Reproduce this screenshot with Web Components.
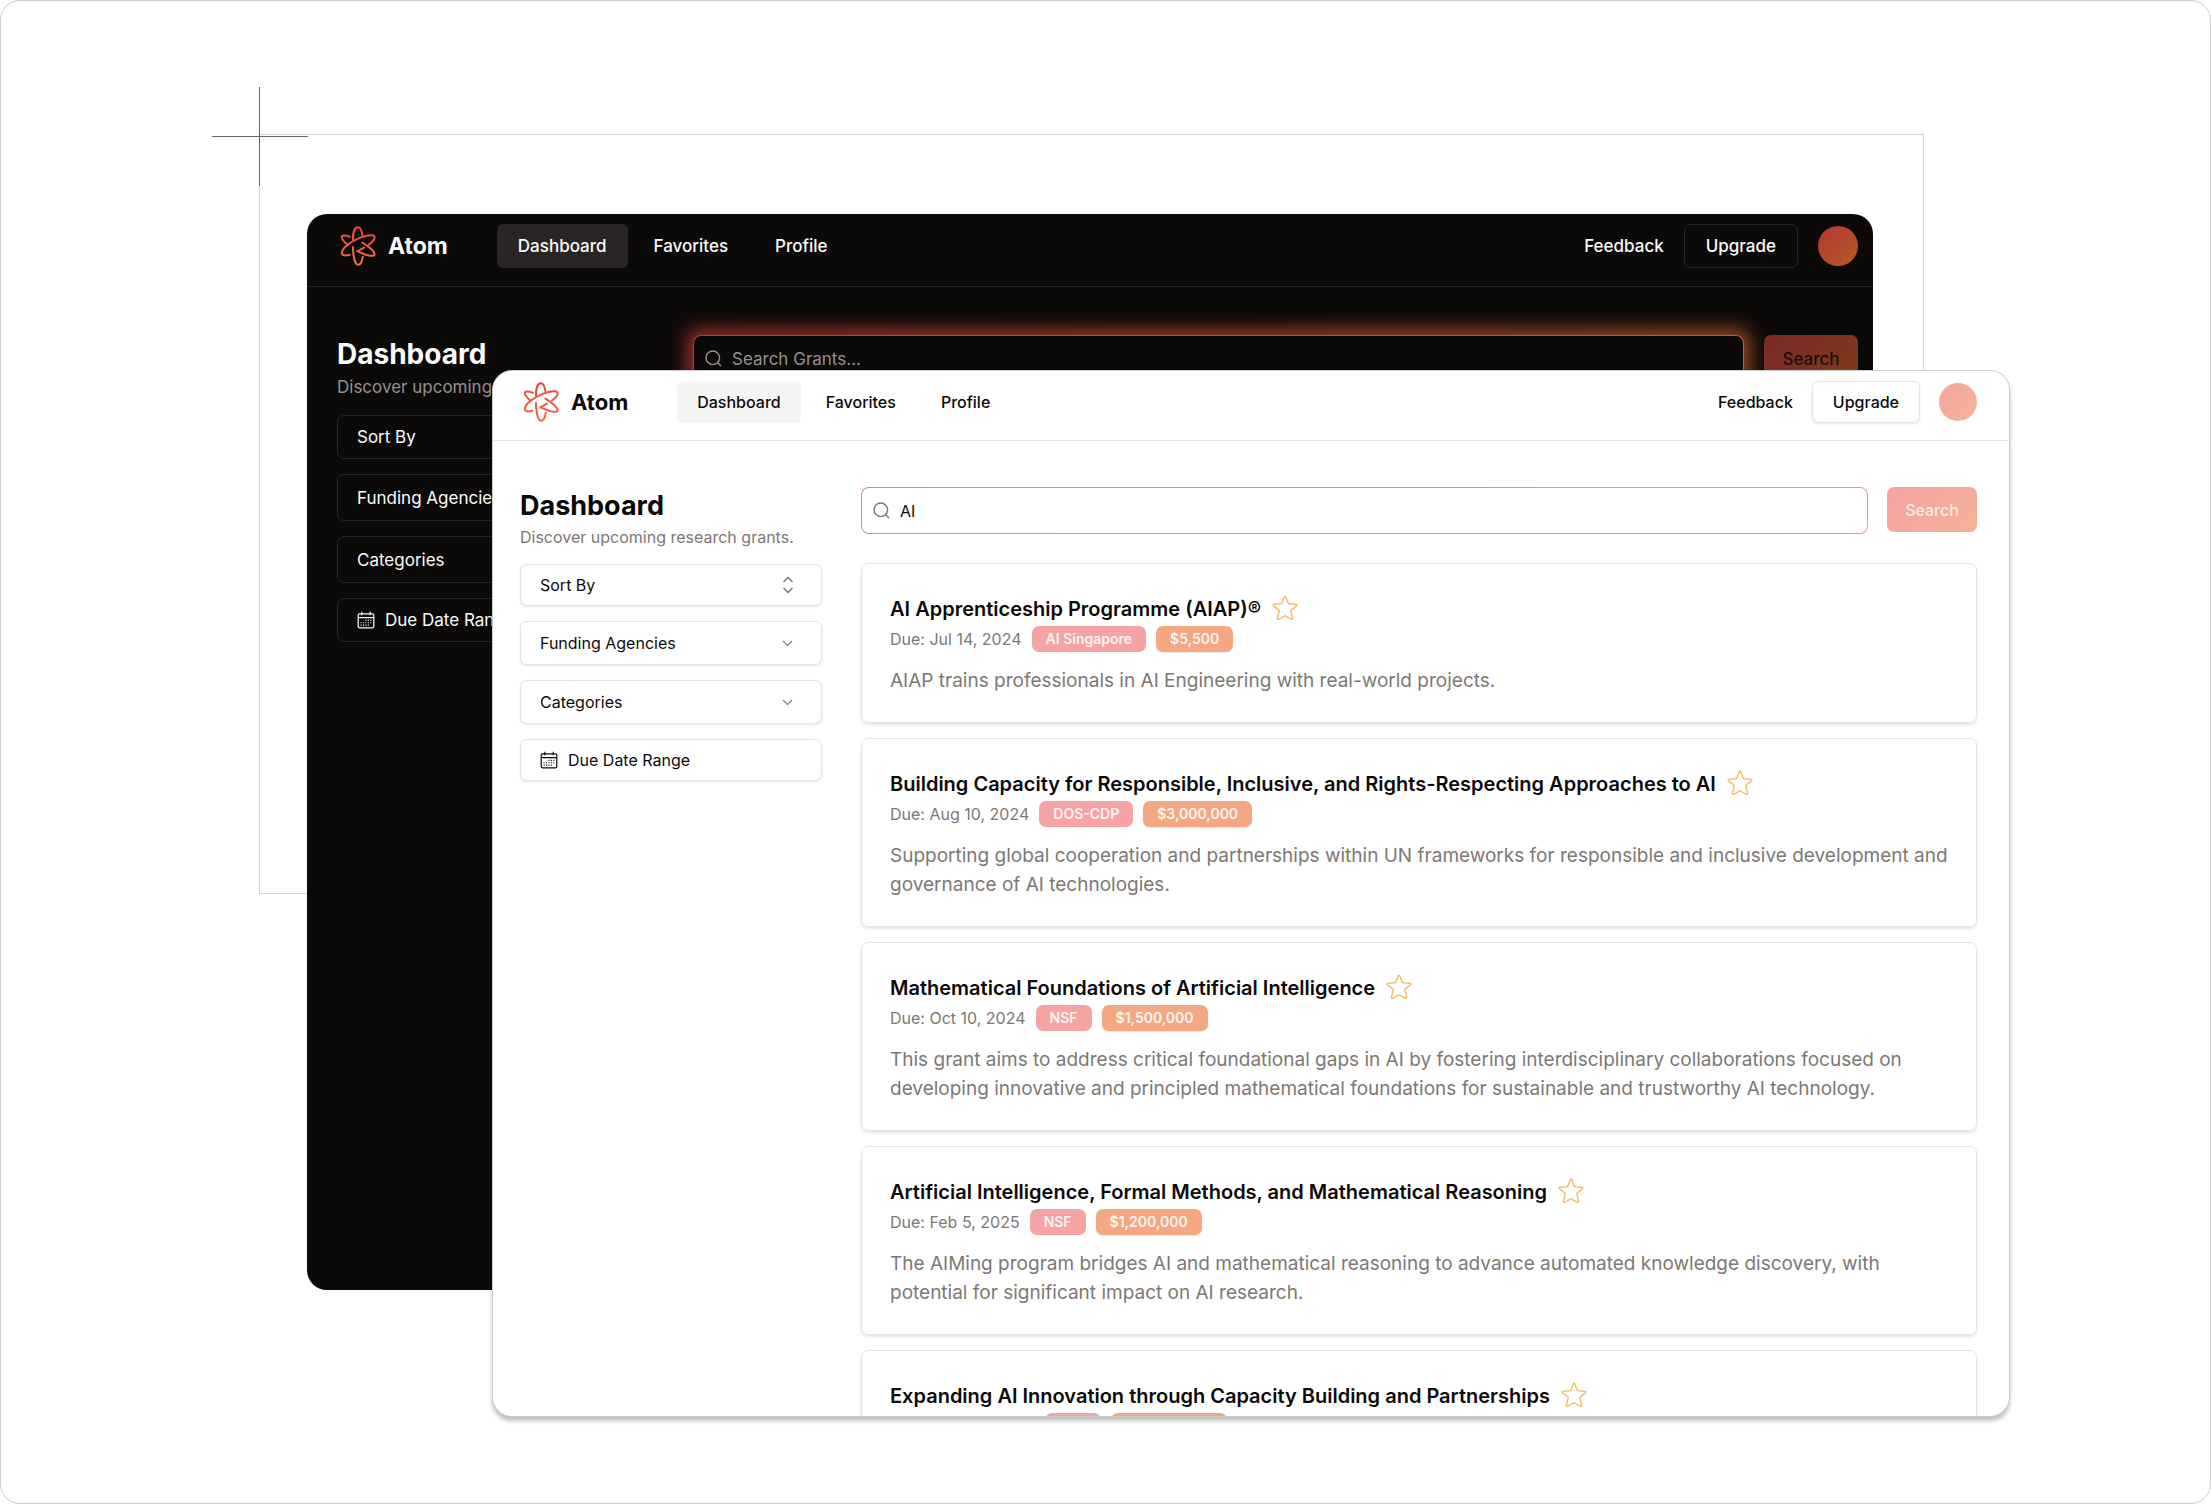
<!DOCTYPE html>
<html lang="en">
<head>
<meta charset="UTF-8">
<meta name="viewport" content="width=device-width, initial-scale=1">
<title>Atom</title>
<style>
    body {
        margin: 0;
        background: #fff;
        font-family: Inter, "Liberation Sans", sans-serif;
    }
</style>
</head>
<body>
<showcase-stage>
    <atom-window slot="back" theme="dark">
        <atom-header slot="header"></atom-header>
        <filter-panel slot="sidebar"></filter-panel>
        <search-bar></search-bar>
    </atom-window>
    <atom-window slot="front" theme="light">
        <atom-header slot="header"></atom-header>
        <filter-panel slot="sidebar"></filter-panel>
        <search-bar query="AI"></search-bar>
        <grant-card due="Jul 14, 2024" agency="AI Singapore" amount="$5,500">
            <span slot="title">AI Apprenticeship Programme (AIAP)®</span>
            AIAP trains professionals in AI Engineering with real-world projects.
        </grant-card>
        <grant-card due="Aug 10, 2024" agency="DOS-CDP" amount="$3,000,000">
            <span slot="title">Building Capacity for Responsible, Inclusive, and Rights-Respecting Approaches to AI</span>
            Supporting global cooperation and partnerships within UN frameworks for responsible and inclusive development and governance of AI technologies.
        </grant-card>
        <grant-card due="Oct 10, 2024" agency="NSF" amount="$1,500,000">
            <span slot="title">Mathematical Foundations of Artificial Intelligence</span>
            This grant aims to address critical foundational gaps in AI by fostering interdisciplinary collaborations focused on developing innovative and principled mathematical foundations for sustainable and trustworthy AI technology.
        </grant-card>
        <grant-card due="Feb 5, 2025" agency="NSF" amount="$1,200,000">
            <span slot="title">Artificial Intelligence, Formal Methods, and Mathematical Reasoning</span>
            The AIMing program bridges AI and mathematical reasoning to advance automated knowledge discovery, with potential for significant impact on AI research.
        </grant-card>
        <grant-card>
            <span slot="title">Expanding AI Innovation through Capacity Building and Partnerships</span>
        </grant-card>
    </atom-window>
</showcase-stage>

<script>
// Canvas with the guide lines and the two overlapping windows
class ShowcaseStage extends HTMLElement {
    constructor() {
        super();
        this.attachShadow({ mode: 'open' });
        this.shadowRoot.innerHTML = `
            <style>
                :host {
                    display: block;
                    position: relative;
                    box-sizing: border-box;
                    min-height: 100vh;
                    border: 1px solid #ccc;
                    border-radius: 20px;
                    overflow: hidden;
                }
                .frame {
                    position: absolute;
                    inset: 133px 286px 609px 258px;
                    border: 1px solid #d4d4d4;
                }
                .cross {
                    position: absolute;
                    left: 211px;
                    top: 86px;
                    width: 96px;
                    height: 99px;
                }
                ::slotted(*) {
                    position: absolute;
                }
                ::slotted([slot="back"]) {
                    inset: 213px 337px 213px 306px;
                }
                ::slotted([slot="front"]) {
                    inset: 369px 200px 86px 491px;
                }
            </style>
            <div class="frame"></div>
            <svg class="cross" viewBox="0 0 96 99" aria-hidden="true">
                <path d="M47.5 0V99M0 49.5H96" stroke="#666" fill="none"/>
            </svg>
            <slot name="back"></slot>
            <slot name="front"></slot>
        `;
    }
}

class AtomWindow extends HTMLElement {
    constructor() {
        super();
        this.attachShadow({ mode: 'open' });
        this.shadowRoot.innerHTML = `
            <style>
                :host {
                    --bg: #fff;
                    --fg: #0c0a09;
                    --muted: #7d7874;
                    --line: #e4e4e4;
                    --pill: #f5f5f4;
                    --edge: 32px;
                    --logo-pad: 30px;
                    --header-end: 17px;
                    --space: 19px;
                    --link-pad: 20px;
                    --control: 42px;
                    --combo: 44px;
                    --avatar: 38px;
                    --text: 16px;
                    --brand: 22px;
                    --heading: 27px;
                    --heading-line: 38px;
                    --sub-line: 24px;
                    --avatar-fill: linear-gradient(135deg, #f5a3a3, #f6b592);
                    --button-fill: linear-gradient(135deg, #f5a3a3, #f6b198);
                    --button-text: #fdeeea;
                    --button-w: 90px;
                    --button-h: 45px;
                    --ring: linear-gradient(135deg, #ef7f78, #f09a7a);
                    --glow: none;
                    --shadow: 0 1px 3px rgba(0, 0, 0, 0.1);
                    box-sizing: border-box;
                    display: flex;
                    flex-direction: column;
                    overflow: hidden;
                    border: 1px solid #ccc;
                    border-radius: 20px;
                    box-shadow: 0 4px 4px rgba(0, 0, 0, 0.25);
                    background: var(--bg);
                    color: var(--fg);
                }
                :host([theme="dark"]) {
                    --bg: #0c0a09;
                    --fg: #fafaf9;
                    --muted: #96908c;
                    --line: #292524;
                    --pill: #292524;
                    --edge: 15px;
                    --logo-pad: 33px;
                    --header-end: 18px;
                    --space: 20px;
                    --link-pad: 21px;
                    --control: 44px;
                    --combo: 47px;
                    --avatar: 40px;
                    --text: 17px;
                    --brand: 23px;
                    --heading: 28px;
                    --heading-line: 39px;
                    --sub-line: 26px;
                    --avatar-fill: linear-gradient(135deg, #b53636, #b35c22);
                    --button-fill: linear-gradient(135deg, #7d2829, #7c3c1a);
                    --button-text: #1a0f0d;
                    --button-w: 94px;
                    --button-h: 47px;
                    --ring: linear-gradient(90deg, #c0392f, #c85a2c);
                    --glow: linear-gradient(90deg, #b3352f, #b3522a);
                    --shadow: none;
                    border: 0;
                    box-shadow: none;
                }
                .body {
                    display: grid;
                    grid-template-columns: 302px minmax(0, 1fr);
                    column-gap: 39px;
                    padding: 46px var(--edge) 0 27px;
                }
                :host([theme="dark"]) .body {
                    grid-template-columns: 312px minmax(0, 1fr);
                    column-gap: 44px;
                    padding: 48px var(--edge) 0 30px;
                }
                .results {
                    display: flex;
                    flex-direction: column;
                    gap: 15px;
                }
            </style>
            <slot name="header"></slot>
            <div class="body">
                <slot name="sidebar"></slot>
                <main class="results"><slot></slot></main>
            </div>
        `;
    }
}

class AtomHeader extends HTMLElement {
    constructor() {
        super();
        this.attachShadow({ mode: 'open' });
        this.shadowRoot.innerHTML = `
            <style>
                :host {
                    display: flex;
                    align-items: center;
                    flex: none;
                    padding: 10px var(--edge) var(--header-end) var(--logo-pad);
                    border-bottom: 1px solid var(--line);
                    font-size: var(--text);
                    font-weight: 500;
                }
                a {
                    color: inherit;
                    text-decoration: none;
                }
                .brand {
                    display: flex;
                    align-items: center;
                    gap: 12px;
                    margin-right: 49px;
                    font-size: var(--brand);
                    font-weight: 700;
                }
                .brand svg {
                    width: 36px;
                    height: 40px;
                }
                nav {
                    display: flex;
                    flex: 1;
                    gap: 5px;
                }
                nav a {
                    padding: 0 var(--link-pad);
                    border-radius: 6px;
                    line-height: var(--control);
                }
                nav a.active {
                    background: var(--pill);
                }
                .actions {
                    display: flex;
                    align-items: center;
                    gap: var(--space);
                }
                .upgrade {
                    box-sizing: border-box;
                    height: var(--control);
                    padding: 0 var(--link-pad);
                    border: 1px solid var(--line);
                    border-radius: 7px;
                    box-shadow: var(--shadow);
                    background: var(--bg);
                    color: inherit;
                    font: inherit;
                }
                .avatar {
                    width: var(--avatar);
                    height: var(--avatar);
                    padding: 0;
                    border: 0;
                    border-radius: 50%;
                    background: var(--avatar-fill);
                }
            </style>
            <a class="brand" href="#">
                <svg viewBox="70 66 106 118" fill="none" stroke="url(#flame)" stroke-width="6" stroke-linecap="round" stroke-linejoin="round" aria-hidden="true">
                    <defs>
                        <linearGradient id="flame" gradientUnits="userSpaceOnUse" x1="123" y1="70" x2="123" y2="180">
                            <stop offset="0" stop-color="#ec4444"/>
                            <stop offset="1" stop-color="#f1703f"/>
                        </linearGradient>
                    </defs>
                    <path d="M108 106C108 82 115 70 123 70C129 70 134 80 136 93"/>
                    <path d="M108 128C109 160 115 180 123 180C129 180 135 171 137 157"/>
                    <path d="M98 151C87 154 75 154 75 146C76 131 100 112 128 101C150 93 172 89 172 99C172 106 163 115 155 121"/>
                    <path d="M99 98C88 93 75 92 75 99C75 106 84 114 93 122"/>
                    <path d="M136 115C158 129 172 142 172 149C172 156 156 154 146 151L121 141L141 130"/>
                </svg>
                Atom
            </a>
            <nav>
                <a class="active" href="#">Dashboard</a>
                <a href="#">Favorites</a>
                <a href="#">Profile</a>
            </nav>
            <div class="actions">
                <a href="#">Feedback</a>
                <button class="upgrade">Upgrade</button>
                <button class="avatar" aria-label="Account"></button>
            </div>
        `;
    }
}

class FilterPanel extends HTMLElement {
    constructor() {
        super();
        this.attachShadow({ mode: 'open' });
        this.shadowRoot.innerHTML = `
            <style>
                :host {
                    display: block;
                    font-size: var(--text);
                }
                h1 {
                    margin: 0;
                    font-size: var(--heading);
                    line-height: var(--heading-line);
                    font-weight: 700;
                }
                p {
                    margin: 0;
                    color: var(--muted);
                    line-height: var(--sub-line);
                    white-space: nowrap;
                }
                .filters {
                    display: flex;
                    flex-direction: column;
                    gap: 15px;
                    margin-top: 15px;
                }
                .field {
                    display: grid;
                    align-items: center;
                }
                .field > * {
                    grid-area: 1 / 1;
                }
                select, button {
                    appearance: none;
                    box-sizing: border-box;
                    width: 100%;
                    height: var(--control);
                    padding: 0 19px;
                    border: 1px solid var(--line);
                    border-radius: 7px;
                    box-shadow: var(--shadow);
                    background: var(--bg);
                    color: inherit;
                    font: inherit;
                }
                .combo {
                    height: var(--combo);
                }
                .field svg {
                    justify-self: end;
                    width: 18px;
                    height: 18px;
                    margin-right: 25px;
                    pointer-events: none;
                }
                button {
                    display: flex;
                    align-items: center;
                    gap: 10px;
                }
                button svg {
                    width: 18px;
                    height: 18px;
                }
            </style>
            <h1>Dashboard</h1>
            <p>Discover upcoming research grants.</p>
            <div class="filters">
                <div class="field">
                    <select aria-label="Sort By"><option>Sort By</option></select>
                    <svg viewBox="0 0 18 18" fill="none" stroke="#777" stroke-width="1.5" aria-hidden="true">
                        <path d="M4.5 6L9 1.5L13.5 6M4.5 12L9 16.5L13.5 12"/>
                    </svg>
                </div>
                <div class="field">
                    <select class="combo" aria-label="Funding Agencies"><option>Funding Agencies</option></select>
                    <svg viewBox="0 0 18 18" fill="none" stroke="#888" stroke-width="1.3" aria-hidden="true"><path d="M4 7L8.5 11.5L13 7"/></svg>
                </div>
                <div class="field">
                    <select class="combo" aria-label="Categories"><option>Categories</option></select>
                    <svg viewBox="0 0 18 18" fill="none" stroke="#888" stroke-width="1.3" aria-hidden="true"><path d="M4 7L8.5 11.5L13 7"/></svg>
                </div>
                <button>
                    <svg viewBox="0 0 15 15" fill="none" stroke="currentColor" aria-hidden="true">
                        <rect x="1" y="2.4" width="13" height="11.6" rx="1"/>
                        <path d="M1 5.5H14M4 .6V3.6M11 .6V3.6"/>
                        <path d="M7 7.8H12M3 9.8H12M3 11.8H10" stroke-width=".9" stroke-dasharray=".9 1.1"/>
                    </svg>
                    Due Date Range
                </button>
            </div>
        `;
    }
}

class SearchBar extends HTMLElement {
    constructor() {
        super();
        this.attachShadow({ mode: 'open' });
    }

    connectedCallback() {
        this.render();
    }

    render() {
        this.shadowRoot.innerHTML = `
            <style>
                :host {
                    display: block;
                    margin-bottom: 14px;
                    font-size: var(--text);
                }
                form {
                    display: flex;
                    align-items: flex-start;
                    gap: var(--space);
                }
                .box {
                    position: relative;
                    flex: 1;
                }
                /* soft halo behind the field, only the dark theme sets --glow */
                .box::before {
                    content: "";
                    position: absolute;
                    inset: -6px;
                    border-radius: 12px;
                    background: var(--glow);
                    filter: blur(9px);
                    opacity: 0.85;
                }
                label {
                    position: relative;
                    box-sizing: border-box;
                    display: flex;
                    align-items: center;
                    gap: 10px;
                    height: 47px;
                    padding: 0 11px;
                    border: 1px solid transparent;
                    border-radius: 8px;
                    background: linear-gradient(var(--bg), var(--bg)) padding-box, var(--ring) border-box;
                    color: var(--muted);
                }
                svg {
                    flex: none;
                    width: 17px;
                    height: 17px;
                }
                input {
                    flex: 1;
                    min-width: 0;
                    padding: 0;
                    border: 0;
                    outline: 0;
                    background: none;
                    color: var(--fg);
                    font: inherit;
                }
                input::placeholder {
                    color: var(--muted);
                }
                button {
                    width: var(--button-w);
                    height: var(--button-h);
                    padding: 0;
                    border: 0;
                    border-radius: 7px;
                    background: var(--button-fill);
                    color: var(--button-text);
                    font: inherit;
                    font-weight: 500;
                }
            </style>
            <form>
                <div class="box">
                    <label>
                        <svg viewBox="0 0 17 17" fill="none" stroke="currentColor" stroke-width="1.4" aria-hidden="true">
                            <circle cx="7.8" cy="7.8" r="6.8"/>
                            <path d="M12.6 12.6L16 16"/>
                        </svg>
                        <input type="text" aria-label="Search grants" placeholder="Search Grants...">
                    </label>
                </div>
                <button type="button">Search</button>
            </form>
        `;
        this.shadowRoot.querySelector('input').value = this.getAttribute('query') || '';
    }
}

class GrantCard extends HTMLElement {
    constructor() {
        super();
        this.attachShadow({ mode: 'open' });
    }

    connectedCallback() {
        this.render();
    }

    render() {
        const due = this.getAttribute('due');
        this.shadowRoot.innerHTML = `
            <style>
                :host {
                    display: block;
                    padding: 29px 28px 27px;
                    border: 1px solid var(--line);
                    border-radius: 7px;
                    box-shadow: 0 2px 3px rgba(0, 0, 0, 0.1);
                }
                .title, .meta {
                    display: flex;
                    align-items: center;
                }
                .title {
                    gap: 11px;
                    height: 33px;
                }
                h2 {
                    margin: 0;
                    font-size: 20px;
                    font-weight: 600;
                    line-height: 33px;
                }
                .star {
                    display: flex;
                    padding: 0 0 4px;
                    border: 0;
                    background: none;
                }
                .star svg {
                    width: 26px;
                    height: 26px;
                }
                .meta {
                    gap: 10px;
                    color: var(--muted);
                    font-size: 16px;
                }
                .badge {
                    padding: 0 14px;
                    border-radius: 7px;
                    background: #f5a3a3;
                    color: #fff5f2;
                    font-size: 14px;
                    font-weight: 600;
                    line-height: 26px;
                }
                .amount {
                    background: #f4a882;
                    box-shadow: 0 1px 2px rgba(0, 0, 0, 0.1);
                }
                /* blank placeholders until the grant details are set */
                .due:empty {
                    width: 145px;
                }
                .badge:empty {
                    width: 28px;
                    height: 26px;
                }
                .amount:empty {
                    width: 88px;
                }
                p {
                    margin: 14px 0 0;
                    color: var(--muted);
                    font-size: 19px;
                    line-height: 29px;
                }
            </style>
            <div class="title">
                <h2><slot name="title"></slot></h2>
                <button class="star" aria-label="Add to favorites">
                    <svg viewBox="0 0 26 26" fill="none" stroke="#f7b654" stroke-width="1.3" stroke-linejoin="round" aria-hidden="true">
                        <path d="M12.2 1.9Q13 .4 13.8 1.9L16.5 8.7L24 9.3Q25.5 9.7 24.5 10.8L18.7 15.6L20.6 23.2Q20.6 24.8 19.2 24.2L13 20.7L6.8 24.2Q5.4 24.8 5.4 23.2L7.3 15.6L1.5 10.8Q.5 9.7 2 9.3L9.5 8.7Z"/>
                    </svg>
                </button>
            </div>
            <div class="meta">
                <span class="due">${due ? 'Due: ' + due : ''}</span>
                <span class="badge">${this.getAttribute('agency') || ''}</span>
                <span class="badge amount">${this.getAttribute('amount') || ''}</span>
            </div>
            <p><slot></slot></p>
        `;
    }
}

customElements.define('showcase-stage', ShowcaseStage);
customElements.define('atom-window', AtomWindow);
customElements.define('atom-header', AtomHeader);
customElements.define('filter-panel', FilterPanel);
customElements.define('search-bar', SearchBar);
customElements.define('grant-card', GrantCard);
</script>
</body>
</html>
